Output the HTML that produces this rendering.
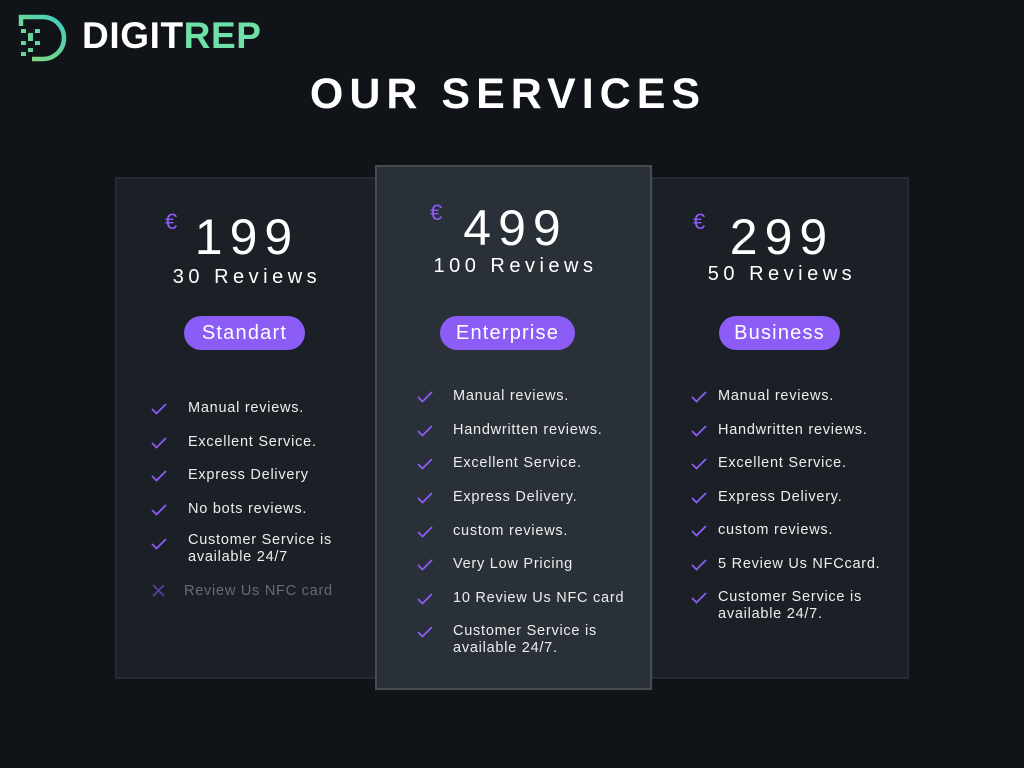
<!DOCTYPE html>
<html><head><meta charset="utf-8"><style>
*{margin:0;padding:0;box-sizing:border-box}
body{width:1024px;height:768px;background:#101418;position:relative;overflow:hidden;font-family:"Liberation Sans",sans-serif;color:#fff}
.logo{position:absolute;left:18px;top:14px}
.logot{position:absolute;left:82px;top:15px;font-size:37px;font-weight:bold;letter-spacing:0.6px}
.title{position:absolute;left:-7px;width:1024px;top:70px;text-align:center;font-size:43px;font-weight:bold;letter-spacing:6px;padding-left:6px}
.card{position:absolute;background:#1b2027;border:2px solid #262b31}
.mid{background:#2a3038;border:2px solid #474c52}
.price{position:absolute;left:0;width:100%;text-align:center;font-size:50px;letter-spacing:7px;padding-left:4px}
.eur{position:absolute;font-size:22px;color:#8b5cf6}
.rev{position:absolute;left:0;width:100%;text-align:center;font-size:20px;letter-spacing:4.5px;padding-left:4px}
.btn{position:absolute;height:34px;background:#8b5cf6;border-radius:17px;text-align:center;line-height:34px;font-size:20px;letter-spacing:1.2px}
.li{position:absolute;font-size:14.5px;letter-spacing:.75px;color:#eee;line-height:17px}
.ck{position:absolute;width:16px;height:12px}
</style></head><body>
<svg class="logo" width="52" height="48" viewBox="0 0 52 48">
<defs><linearGradient id="g" x1="0" y1="1" x2="1" y2="0"><stop offset="0" stop-color="#8fd97a"/><stop offset="1" stop-color="#3ecfc2"/></linearGradient></defs>
<path d="M3 12V3h22a21 21 0 0 1 0 42H14" fill="none" stroke="url(#g)" stroke-width="4.5"/>
<g fill="url(#g)"><rect x="3" y="15" width="5" height="4"/><rect x="10" y="19" width="5" height="4"/><rect x="17" y="15" width="5" height="4"/><rect x="3" y="27" width="5" height="4"/><rect x="10" y="23" width="5" height="4"/><rect x="17" y="27" width="5" height="4"/><rect x="3" y="38" width="5" height="4"/><rect x="10" y="34" width="5" height="4"/></g>
</svg>
<div class="logot">DIGIT<span style="color:#6fe0a8">REP</span></div>
<div class="title">OUR SERVICES</div>

<div class="card" style="left:115px;top:177px;width:262px;height:502px"></div>
<div class="card" style="left:651px;top:177px;width:258px;height:502px"></div>
<div class="card mid" style="left:375px;top:165px;width:277px;height:525px"></div>

<div class="eur" style="left:165px;top:209px">€</div>
<div class="eur" style="left:430px;top:200px">€</div>
<div class="eur" style="left:693px;top:209px">€</div>

<div style="position:absolute;left:115px;top:0;width:260px">
<div class="price" style="top:208px">199</div>
<div class="rev" style="top:266px">30 Reviews</div>
</div>
<div class="btn" style="left:184px;top:316px;width:121px">Standart</div>

<div style="position:absolute;left:376px;top:0;width:275px">
<div class="price" style="top:199px">499</div>
<div class="rev" style="top:255px">100 Reviews</div>
</div>
<div class="btn" style="left:440px;top:316px;width:135px">Enterprise</div>

<div style="position:absolute;left:651px;top:0;width:258px">
<div class="price" style="top:208px">299</div>
<div class="rev" style="top:263px">50 Reviews</div>
</div>
<div class="btn" style="left:719px;top:316px;width:121px">Business</div>

<svg width="0" height="0" style="position:absolute"><defs><symbol id="c" viewBox="0 0 16 12"><path d="M1 6l4.5 4.5L15 1" fill="none" stroke="#8b5cf6" stroke-width="1.8"/></symbol></defs></svg>

<!-- left -->
<svg class="ck" style="left:151px;top:403px"><use href="#c"/></svg><div class="li" style="left:188px;top:400px">Manual reviews.</div>
<svg class="ck" style="left:151px;top:437px"><use href="#c"/></svg><div class="li" style="left:188px;top:434px">Excellent Service.</div>
<svg class="ck" style="left:151px;top:470px"><use href="#c"/></svg><div class="li" style="left:188px;top:467px">Express Delivery</div>
<svg class="ck" style="left:151px;top:504px"><use href="#c"/></svg><div class="li" style="left:188px;top:501px">No bots reviews.</div>
<svg class="ck" style="left:151px;top:538px"><use href="#c"/></svg><div class="li" style="left:188px;top:532px">Customer Service is<br>available 24/7</div>
<svg style="position:absolute;left:152px;top:584px" width="13" height="13"><path d="M1 1l11 11M12 1L1 12" stroke="#5b3fa8" stroke-width="1.6"/></svg><div class="li" style="left:184px;top:583px;color:#666b70">Review Us NFC card</div>

<!-- middle -->
<svg class="ck" style="left:417px;top:391px"><use href="#c"/></svg><div class="li" style="left:453px;top:388px">Manual reviews.</div>
<svg class="ck" style="left:417px;top:425px"><use href="#c"/></svg><div class="li" style="left:453px;top:422px">Handwritten reviews.</div>
<svg class="ck" style="left:417px;top:458px"><use href="#c"/></svg><div class="li" style="left:453px;top:455px">Excellent Service.</div>
<svg class="ck" style="left:417px;top:492px"><use href="#c"/></svg><div class="li" style="left:453px;top:489px">Express Delivery.</div>
<svg class="ck" style="left:417px;top:526px"><use href="#c"/></svg><div class="li" style="left:453px;top:523px">custom reviews.</div>
<svg class="ck" style="left:417px;top:559px"><use href="#c"/></svg><div class="li" style="left:453px;top:556px">Very Low Pricing</div>
<svg class="ck" style="left:417px;top:593px"><use href="#c"/></svg><div class="li" style="left:453px;top:590px">10 Review Us NFC card</div>
<svg class="ck" style="left:417px;top:626px"><use href="#c"/></svg><div class="li" style="left:453px;top:623px">Customer Service is<br>available 24/7.</div>

<!-- right -->
<svg class="ck" style="left:691px;top:391px"><use href="#c"/></svg><div class="li" style="left:718px;top:388px">Manual reviews.</div>
<svg class="ck" style="left:691px;top:425px"><use href="#c"/></svg><div class="li" style="left:718px;top:422px">Handwritten reviews.</div>
<svg class="ck" style="left:691px;top:458px"><use href="#c"/></svg><div class="li" style="left:718px;top:455px">Excellent Service.</div>
<svg class="ck" style="left:691px;top:492px"><use href="#c"/></svg><div class="li" style="left:718px;top:489px">Express Delivery.</div>
<svg class="ck" style="left:691px;top:525px"><use href="#c"/></svg><div class="li" style="left:718px;top:522px">custom reviews.</div>
<svg class="ck" style="left:691px;top:559px"><use href="#c"/></svg><div class="li" style="left:718px;top:556px">5 Review Us NFCcard.</div>
<svg class="ck" style="left:691px;top:592px"><use href="#c"/></svg><div class="li" style="left:718px;top:589px">Customer Service is<br>available 24/7.</div>
</body></html>
